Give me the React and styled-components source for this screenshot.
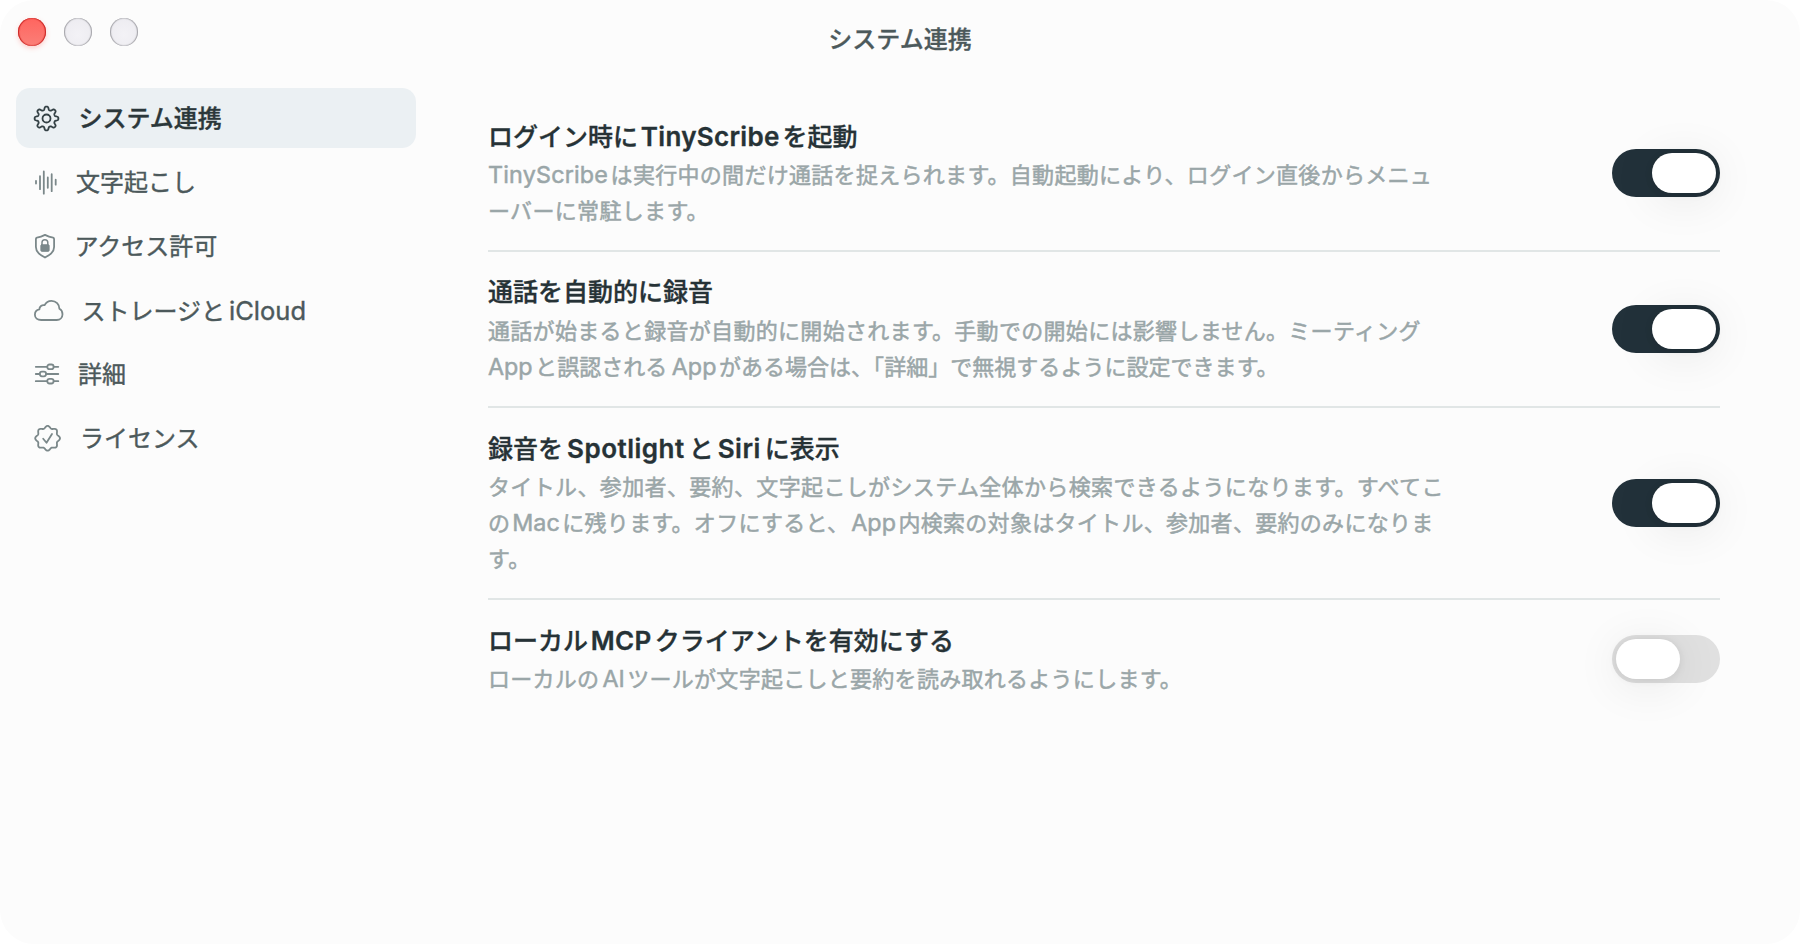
import React from "react";
import styled, { createGlobalStyle, css } from "styled-components";

const Global = createGlobalStyle`
  * { box-sizing: border-box; }
  html, body { margin: 0; padding: 0; background: #fff; }
  body { font-family: Inter, "Noto Sans CJK JP", sans-serif; overflow: hidden; }
`;

const Window = styled.div`
  display: flex;
  flex-direction: column;
  width: 1800px;
  height: 944px;
  background: #fcfcfc;
  border-radius: 34px;
  overflow: hidden;
`;

const TitleBar = styled.header`
  display: grid;
  grid-template-columns: 1fr auto 1fr;
  align-items: start;
  height: 88px;
  padding: 18px;
  flex: none;
`;

const Lights = styled.div`
  display: flex;
  gap: 18px;
`;

const Light = styled.span`
  width: 28px;
  height: 28px;
  border-radius: 50%;
  ${(p) =>
    p.$close
      ? css`
          background: linear-gradient(#ff655f, #fb7f78);
          box-shadow: inset 1px 0 1px rgba(190, 20, 20, 0.8), inset -1px 0 1px rgba(190, 20, 20, 0.8),
            inset 0 0 1px 1px rgba(225, 60, 55, 0.4), 0 2px 5px rgba(255, 100, 90, 0.3);
        `
      : css`
          background: radial-gradient(circle at 50% 60%, #f3f2f6, #ebeaef);
          box-shadow: inset 1px 0 1px rgba(130, 130, 136, 0.65), inset -1px 0 1px rgba(130, 130, 136, 0.65),
            inset 0 0 1px 1px rgba(185, 185, 190, 0.3);
        `}
`;

const WindowTitle = styled.h1`
  margin: 0;
  padding-top: 4px;
  font-size: 24px;
  line-height: 36px;
  font-weight: 500;
  color: #4c595b;
  -webkit-text-stroke: 0.3px currentColor;
`;

const Body = styled.div`
  display: flex;
  flex: 1;
`;

const Sidebar = styled.nav`
  display: flex;
  flex-direction: column;
  gap: 4px;
  width: 400px;
  margin-left: 16px;
  flex: none;
`;

const NavItem = styled.a`
  display: flex;
  align-items: center;
  gap: ${(p) => p.$gap}px;
  height: 60px;
  padding-left: 18px;
  border-radius: 14px;
  font-size: 24px;
  line-height: 36px;
  white-space: nowrap;
  color: ${(p) => (p.$active ? "#2b373a" : "#4c595b")};
  font-weight: ${(p) => (p.$active ? 500 : 400)};
  background: ${(p) => (p.$active ? "#ebf0f3" : "transparent")};
  -webkit-text-stroke: 0.4px currentColor;
`;

const NavLabel = styled.span`
  padding-top: 2px;
`;

const NavIcon = styled.svg`
  flex: none;
  overflow: visible;
  fill: none;
  stroke: ${(p) => (p.$active ? "#344145" : "#7b888a")};
  stroke-width: 1.8;
  stroke-linecap: round;
  stroke-linejoin: round;
`;

const Settings = styled.main`
  display: flex;
  flex-direction: column;
  width: 1232px;
  margin-left: 72px;
  padding-top: 8px;
`;

const Row = styled.section`
  display: flex;
  align-items: center;
  justify-content: space-between;
  padding: 24px 0;
  & + & {
    border-top: 2px solid #e1e6e6;
  }
`;

const RowTitle = styled.h2`
  margin: 0;
  font-size: 25px;
  line-height: 33px;
  height: 37px;
  font-weight: 500;
  letter-spacing: 0;
  color: #263236;
  white-space: nowrap;
  -webkit-text-stroke: 0.35px currentColor;
`;

const RowText = styled.p`
  margin: 0 0 -3px;
  font-size: 22px;
  line-height: 36px;
  color: #9aa6a8;
  white-space: nowrap;
  -webkit-text-stroke: 0.5px currentColor;
`;

const Line = styled.span`
  display: block;
  height: 36px;
  letter-spacing: ${(p) => p.$spacing ?? 0.33}px;
`;

const Latin = styled.span`
  margin: 0 ${(p) => p.$after}px 0 ${(p) => p.$before}px;
  font-size: ${(p) => p.$size}px;
  letter-spacing: ${(p) => p.$track}px;
  font-weight: ${(p) => p.$weight};
`;

const Toggle = styled.button`
  display: flex;
  justify-content: ${(p) => (p.$on ? "flex-end" : "flex-start")};
  width: 108px;
  height: 48px;
  padding: 4px;
  border: 0;
  border-radius: 24px;
  background: ${(p) => (p.$on ? "#22313a" : "#e0e0e0")};
  flex: none;
`;

const Knob = styled.span`
  width: 64px;
  height: 40px;
  border-radius: 20px;
  background: #fff;
  box-shadow: 0 6px 48px rgba(0, 0, 0, 0.09), 0 1px 9px rgba(0, 0, 0, 0.08);
`;

// Closed outline whose radius swings between tooth and valley eight times.
function lobes(cx, cy, base, swing, sharp) {
  const pts = [];
  for (let i = 0; i < 160; i++) {
    const a = (i / 160) * Math.PI * 2;
    const wave = sharp ? Math.tanh(sharp * Math.cos(8 * a)) / Math.tanh(sharp) : Math.cos(8 * a);
    const r = base + swing * wave;
    pts.push(`${(cx + r * Math.sin(a)).toFixed(2)} ${(cy - r * Math.cos(a)).toFixed(2)}`);
  }
  return `M${pts.join("L")}Z`;
}

const icons = {
  gear: (
    <>
      <path d={lobes(12.5, 12.5, 10.3, 1.6, 1.8)} />
      <circle cx="12.5" cy="12.5" r="4" />
    </>
  ),
  wave: <path d="M2 10.8v2.7M6 6.2v13M9.8 1.5v22.2M13.8 7.5v10.3M17.7 4.2v17M21.7 9.7v5" />,
  shield: (
    <>
      <path d="M11 1.9 C8.6 3.2 5.4 4.3 2.9 4.7 Q1.9 4.9 1.9 5.9 V14 C1.9 19.4 6.5 22 11 24.5 C15.5 22 20.1 19.4 20.1 14 V5.9 Q20.1 4.9 19.1 4.7 C16.6 4.3 13.4 3.2 11 1.9Z" />
      <path d="M8 12V9.6a2.9 2.9 0 0 1 5.8 0V12" strokeWidth="1.5" />
      <rect x="6.9" y="11.8" width="8.2" height="6.5" rx="0.8" fill="#7b888a" strokeWidth="1" />
    </>
  ),
  cloud: (
    <path d="M7.2 20 C3.4 20 0.9 17.8 0.9 14.7 C0.9 12 2.8 9.8 5.4 9.4 C5.3 6.5 8 4.5 10.6 5.2 C12 2.3 14.6 0.9 17.5 0.9 C22 0.9 25.4 4.3 25.4 8.8 C27.4 9.8 28.5 11.8 28.5 14.2 C28.5 17.5 26 20 22.7 20Z" />
  ),
  sliders: (
    <>
      <path d="M1.8 4.8h11.4M19.7 4.8h4.6M1.8 12h3.8M12.3 12h12M1.8 19.2h11.4M19.7 19.2h4.6" />
      <rect x="13.3" y="2.5" width="6.3" height="4.6" rx="2.2" />
      <rect x="5.8" y="9.7" width="6.3" height="4.6" rx="2.2" />
      <rect x="13.3" y="16.9" width="6.3" height="4.6" rx="2.2" />
    </>
  ),
  badge: (
    <>
      <path d={lobes(13.6, 13.3, 11.3, 1.1, 0)} />
      <path d="M9.2 13.8l3.3 4L18 9" />
    </>
  ),
};

const nav = [
  { icon: "gear", w: 25, h: 25, gap: 19.5, text: "システム連携", active: true },
  { icon: "wave", w: 24, h: 25, gap: 18, text: "文字起こし" },
  { icon: "shield", w: 22, h: 26, gap: 18.5, text: "アクセス許可" },
  { icon: "cloud", w: 30, h: 21, gap: 17.5, text: "ストレージとiCloud" },
  { icon: "sliders", w: 25, h: 24, gap: 19, text: "詳細" },
  { icon: "badge", w: 27, h: 27, gap: 19, text: "ライセンス" },
];

const rows = [
  {
    title: "ログイン時にTinyScribeを起動",
    lines: [
      { text: "TinyScribeは実行中の間だけ通話を捉えられます。自動起動により、ログイン直後からメニュ", latin: { track: 0.2 }, spacing: 0.3 },
      { text: "ーバーに常駐します。" },
    ],
    on: true,
  },
  {
    title: "通話を自動的に録音",
    lines: [
      { text: "通話が始まると録音が自動的に開始されます。手動での開始には影響しません。ミーティング", spacing: 0.31 },
      {
        text: "Appと誤認されるAppがある場合は、「詳細」で無視するように設定できます。",
        latin: { before: 4.5 },
        spacing: 0.03,
      },
    ],
    on: true,
  },
  {
    title: "録音をSpotlightとSiriに表示",
    latin: { track: 0.5, before: 4, after: 4 },
    lines: [
      { text: "タイトル、参加者、要約、文字起こしがシステム全体から検索できるようになります。すべてこ", spacing: 0.36 },
      { text: "のMacに残ります。オフにすると、App内検索の対象はタイトル、参加者、要約のみになりま", spacing: 0.3 },
      { text: "す。" },
    ],
    on: true,
  },
  {
    title: "ローカルMCPクライアントを有効にする",
    lines: [{ text: "ローカルのAIツールが文字起こしと要約を読み取れるようにします。", latin: { before: 3 }, spacing: 0.28 }],
    on: false,
  },
];

// Splits mixed Japanese and Latin text so that Latin runs get their own size and spacing.
function Mixed({ text, size, weight = 400, before = 3, after = 3, track = 0 }) {
  return text.split(/([A-Za-z]+)/).map((part, i) =>
    i % 2 ? (
      <Latin
        key={i}
        $size={size}
        $weight={weight}
        $track={track}
        $before={text.startsWith(part) && i === 1 ? 0 : before}
        $after={after}
      >
        {part}
      </Latin>
    ) : (
      part
    )
  );
}

export default function App() {
  return (
    <>
      <Global />
      <Window>
        <TitleBar>
          <Lights>
            <Light $close />
            <Light />
            <Light />
          </Lights>
          <WindowTitle>システム連携</WindowTitle>
        </TitleBar>
        <Body>
          <Sidebar>
            {nav.map((n) => (
              <NavItem key={n.text} $gap={n.gap} $active={n.active}>
                <NavIcon width={n.w} height={n.h} viewBox={`0 0 ${n.w} ${n.h}`} $active={n.active}>
                  {icons[n.icon]}
                </NavIcon>
                <NavLabel>
                  <Mixed text={n.text} size={25.5} before={4} />
                </NavLabel>
              </NavItem>
            ))}
          </Sidebar>
          <Settings>
            {rows.map((r) => (
              <Row key={r.title}>
                <div>
                  <RowTitle>
                    <Mixed text={r.title} size={26} weight={600} track={0.3} before={2.8} {...r.latin} />
                  </RowTitle>
                  <RowText>
                    {r.lines.map((l) => (
                      <Line key={l.text} $spacing={l.spacing}>
                        <Mixed text={l.text} size={23.3} before={2} after={2.5} {...l.latin} />
                      </Line>
                    ))}
                  </RowText>
                </div>
                <Toggle $on={r.on} aria-pressed={r.on} aria-label={r.title}>
                  <Knob />
                </Toggle>
              </Row>
            ))}
          </Settings>
        </Body>
      </Window>
    </>
  );
}
